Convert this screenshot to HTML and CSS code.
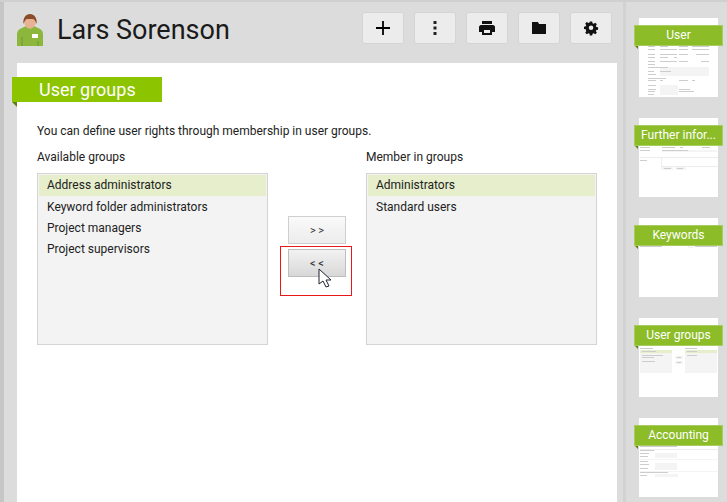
FILE: index.html
```html
<!DOCTYPE html>
<html lang="en">
<head>
    <meta charset="UTF-8">
    <title>Lars Sorenson - User groups</title>
    <link rel="stylesheet" href="styles.css">
</head>
<body>
    <div class="edge"></div>

    <main class="main">
        <header class="header">
            <svg class="avatar" width="26" height="32" viewBox="0 0 26 32">
                <path d="M0 32V20c0-3 2-5 5-6l4-2h8l4 2c3 1 5 3 5 6v12z" fill="#8cb63c"/>
                <path d="M5 32V23M21 32V27" stroke="#6f9628" stroke-width="1" fill="none"/>
                <path d="M7 9c0-5 2-8 6-8s6 3 6 8l-2 4-4 2-4-2z" fill="#e8b394"/>
                <path d="M6.500 10C5.500 4 9 0 13 0s7.500 4 6.500 10c-1-3-2-5-4-5h-5c-2 0-3 2-4 5z" fill="#8a4b2a"/>
                <rect x="15" y="20" width="6" height="4" fill="#fff"/>
            </svg>
            <h1 class="name">Lars Sorenson</h1>
            <div class="tools">
                <button class="tool">
                    <svg width="16" height="16" viewBox="0 0 16 16"><path d="M8 1v14M1 8h14" stroke="#000" stroke-width="1.800"/></svg>
                </button>
                <button class="tool">
                    <svg width="16" height="16" viewBox="0 0 16 16"><path d="M6.500 1h3v3h-3zM6.500 6.500h3v3h-3zM6.500 12h3v3h-3z" fill="#222"/></svg>
                </button>
                <button class="tool">
                    <svg width="16" height="16" viewBox="0 0 16 16"><path d="M3 1h10v3H3zM2 5h12c1 0 2 1 2 2v5h-3v3H3v-3H0V7c0-1 1-2 2-2zm3 5v3h6v-3z" fill="#111" fill-rule="evenodd"/></svg>
                </button>
                <button class="tool">
                    <svg width="16" height="16" viewBox="0 0 16 16"><path d="M1 2h6l1 2h7v10H1z" fill="#111"/></svg>
                </button>
                <button class="tool">
                    <svg width="16" height="16" viewBox="0 0 16 16"><path d="M6.700 1h2.600l.4 2 1.300.6 1.800-1.100 1.800 1.800-1.100 1.800.5 1.300 2 .4v2.600l-2 .4-.5 1.300 1.100 1.800-1.800 1.800-1.800-1.100-1.300.5-.4 2H6.700l-.4-2-1.300-.5-1.800 1.100-1.800-1.800 1.100-1.800L2 9.900l-2-.3V7l2-.4.5-1.300L1.400 3.500l1.800-1.800L5 2.800l1.300-.6zM8 5.700a2.600 2.600 0 1 0 0 5.200 2.600 2.600 0 0 0 0-5.200z" fill="#111" fill-rule="evenodd" transform="translate(1 .5) scale(.88)"/></svg>
                </button>
            </div>
        </header>

        <section class="panel">
            <h2 class="ribbon">User groups</h2>
            <p class="intro">You can define user rights through membership in user groups.</p>

            <div class="pickers">
                <div class="picker">
                    <div class="picker-label">Available groups</div>
                    <ul class="list">
                        <li class="selected">Address administrators</li>
                        <li>Keyword folder administrators</li>
                        <li>Project managers</li>
                        <li>Project supervisors</li>
                    </ul>
                </div>

                <div class="moves">
                    <button class="move">&gt; &gt;</button>
                    <div class="highlight">
                        <button class="move pressed">&lt; &lt;</button>
                        <svg class="cursor" width="14" height="20" viewBox="0 0 14 20">
                            <path d="M1 1v15l4-3 3 6 3-1-3-6h5z" fill="#fff" stroke="#1c2430" stroke-width="1"/>
                        </svg>
                    </div>
                </div>

                <div class="picker">
                    <div class="picker-label">Member in groups</div>
                    <ul class="list">
                        <li class="selected">Administrators</li>
                        <li>Standard users</li>
                    </ul>
                </div>
            </div>
        </section>
    </main>

    <div class="splitter"></div>

    <aside class="sidebar">
        <div class="thumb">
            <svg class="preview" width="79" height="79" viewBox="0 0 79 79">
                <path class="fields" d="M21 49h49v9H21zM21 67h18v10H21z"/>
                <path class="marks" d="M9 28h7v1H9zM21 28h8v1h-8zM40 28h9v1h-9zM53 28h17v1H53zM9 31h7v1H9zM21 31h17v1H21zM40 31h9v1h-9zM53 31h17v1H53zM57 36h13v1H57zM9 36h7v1H9zM21 36h17v1H21zM40 36h9v1h-9zM9 39h7v1H9zM21 39h8v1h-8zM35 39h3v1h-3zM9 43h7v1H9zM21 43h17v1H21zM40 43h9v1h-9zM62 43h8v1h-8zM9 46h7v1H9zM9 49h20v1H9zM9 53h6v1H9zM21 53h11v1H21zM9 56h8v1H9zM9 60h18v1H9zM9 62h8v1H9zM21 62h3v1h-3zM40 62h9v1h-9zM53 62h3v1h-3zM9 67h8v1H9zM9 71h8v1H9zM40 71h11v1H40zM9 73h7v1H9zM40 73h15v1H40zM9 76h6v1H9z"/>
            </svg>
            <div class="thumb-tag">User</div>
        </div>
        <div class="thumb">
            <svg class="preview" width="79" height="79" viewBox="0 0 79 79">
                <path class="fields" d="M22 48h12v4H22zM36 48h11v4H36zM23 32h55v2H23z"/>
                <path class="lines" d="M1 39h78v1H1zM22 40h1v8h-1zM22 48h57v1H22z"/>
                <path class="marks" d="M1 29h10v1H1zM23 29h13v1H23zM41 29h3v1h-3zM63 29h8v1h-8zM1 32h10v1H1zM23 32h26v1H23zM1 42h7v1H1zM25 50h7v1h-7zM38 50h6v1h-6z"/>
            </svg>
            <div class="thumb-tag">Further infor...</div>
        </div>
        <div class="thumb">
            <svg class="preview" width="79" height="79" viewBox="0 0 79 79">
                <path class="fields" d="M49 27h6v3h-6z"/>
                <path class="marks" d="M1 28h22v1H1zM56 28h22v1H56z"/>
            </svg>
            <div class="thumb-tag">Keywords</div>
        </div>
        <div class="thumb">
            <svg class="preview" width="79" height="79" viewBox="0 0 79 79">
                <path class="fields" d="M1 32h32v23H1zM46 32h32v23H46zM36 38h8v3h-8zM36 43h8v3h-8z"/>
                <path class="chosen" d="M1 32h32v3H1zM46 32h32v3H46z"/>
                <path class="marks" d="M1 30h13v1H1zM46 30h12v1H46zM3 33h14v1H3zM3 37h21v1H3zM3 39h12v1H3zM3 43h13v1H3zM48 33h10v1H48zM48 37h10v1H48zM38 39h4v1h-4zM38 44h4v1h-4z"/>
            </svg>
            <div class="thumb-tag">User groups</div>
        </div>
        <div class="thumb">
            <svg class="preview" width="79" height="79" viewBox="0 0 79 79">
                <path class="fields" d="M16 35h22v5H16zM1 41h78v1H1zM16 45h22v7H16zM1 53h78v1H1zM16 56h23v3H16z"/>
                <path class="lines" d="M1 31h78v1H1z"/>
                <path class="marks" d="M1 28h37v1H1zM1 32h14v1H1zM1 35h9v1H1zM1 38h8v1H1zM1 43h8v1H1zM1 46h9v1H1zM1 50h8v1H1zM1 54h28v1H1zM1 57h7v1H1z"/>
            </svg>
            <div class="thumb-tag">Accounting</div>
        </div>
    </aside>
</body>
</html>
```

FILE: styles.css
```css
* {
    box-sizing: border-box;
}

html, body {
    height: 100%;
}

body {
    margin: 0;
    display: flex;
    overflow: hidden;
    background-color: #dcdcdc;
    border-top: 2px solid #d0d0d0;
    font-family: Roboto, "Noto Sans", sans-serif;
    font-size: 12px;
    color: #222;
}

.edge {
    width: 4px;
    background-color: #c6c6c6;
}

.main {
    width: 619px;
    padding-left: 13px;
    display: flex;
    flex-direction: column;
}

/* Header */
.header {
    height: 61px;
    display: flex;
    align-items: center;
    padding-bottom: 6px;
}

.avatar {
    margin-right: 14px;
}

.name {
    margin: 0;
    font-size: 27px;
    font-weight: 400;
    color: #1a1a1a;
}

.tools {
    margin: -3px 11px 0 auto;
    display: flex;
    gap: 10px;
}

.tool {
    width: 42px;
    height: 32px;
    padding: 0;
    display: flex;
    align-items: center;
    justify-content: center;
    background-color: #ececec;
    border: 1px solid #d4d4d4;
    border-radius: 3px;
}

/* Main panel */
.panel {
    position: relative;
    flex: 1;
    width: 600px;
    padding: 14px 20px 0;
    background-color: #fff;
}

.ribbon {
    position: absolute;
    top: 14px;
    left: -5px;
    width: 150px;
    height: 25px;
    margin: 0;
    padding-left: 27px;
    background-color: #8cc400;
    color: #fff;
    font-size: 18px;
    font-weight: 400;
    line-height: 25px;
}

.ribbon::after {
    content: "";
    position: absolute;
    left: 0;
    bottom: -5px;
    border-top: 5px solid #5d7f10;
    border-left: 5px solid transparent;
}

.intro {
    margin: 46px 0 0;
    line-height: 17px;
}

.pickers {
    margin-top: 9px;
    display: flex;
}

.picker {
    width: 231px;
}

.picker-label {
    line-height: 17px;
    margin-bottom: 7px;
}

.list {
    height: 172px;
    margin: 0;
    padding: 1px;
    list-style: none;
    background-color: #f3f3f3;
    border: 1px solid #d4d4d4;
}

.list li {
    height: 21px;
    padding-left: 8px;
    line-height: 21px;
}

.list .selected {
    margin-bottom: 1px;
    background-color: #e6eecb;
}

/* Move buttons */
.moves {
    width: 98px;
    padding-top: 67px;
    display: flex;
    flex-direction: column;
    align-items: center;
}

.move {
    display: block;
    width: 58px;
    height: 28px;
    padding: 0;
    background: linear-gradient(#fafafa, #ececec);
    border: 1px solid #cfcfcf;
    font-family: inherit;
    font-size: 11px;
    color: #333;
}

.highlight {
    position: relative;
    width: 72px;
    height: 50px;
    margin: 2px 2px 0 0;
    padding: 2px 0 0 2px;
    display: flex;
    justify-content: center;
    border: 1px solid #e81818;
}

.pressed {
    background: linear-gradient(#f2f2f2, #d8d8d8);
    border-color: #bdbdbd;
}

.cursor {
    position: absolute;
    left: 37px;
    top: 21px;
}

/* Splitter and thumbnails */
.splitter {
    width: 3px;
    background-color: #d2d2d2;
}

.sidebar {
    flex: 1;
    padding: 16px 0 0 13px;
    display: flex;
    flex-direction: column;
    gap: 21px;
}

.thumb {
    position: relative;
    width: 79px;
    height: 79px;
    flex: none;
    background-color: #fff;
}

.preview {
    display: block;
}

.marks {
    fill: #cdcdcd;
}

.fields {
    fill: #f4f4f4;
}

.lines {
    fill: #ececec;
}

.chosen {
    fill: #e6eecb;
}

.thumb-tag {
    position: absolute;
    top: 7px;
    left: -5px;
    width: 89px;
    height: 21px;
    background-color: #8cbc28;
    border: 1px solid #a8cc60;
    color: #fff;
    font-size: 12px;
    line-height: 18px;
    text-align: center;
    white-space: nowrap;
}

.thumb-tag::after {
    content: "";
    position: absolute;
    left: 0;
    bottom: -4px;
    border-top: 3px solid #5d7f10;
    border-left: 3px solid transparent;
}
```
